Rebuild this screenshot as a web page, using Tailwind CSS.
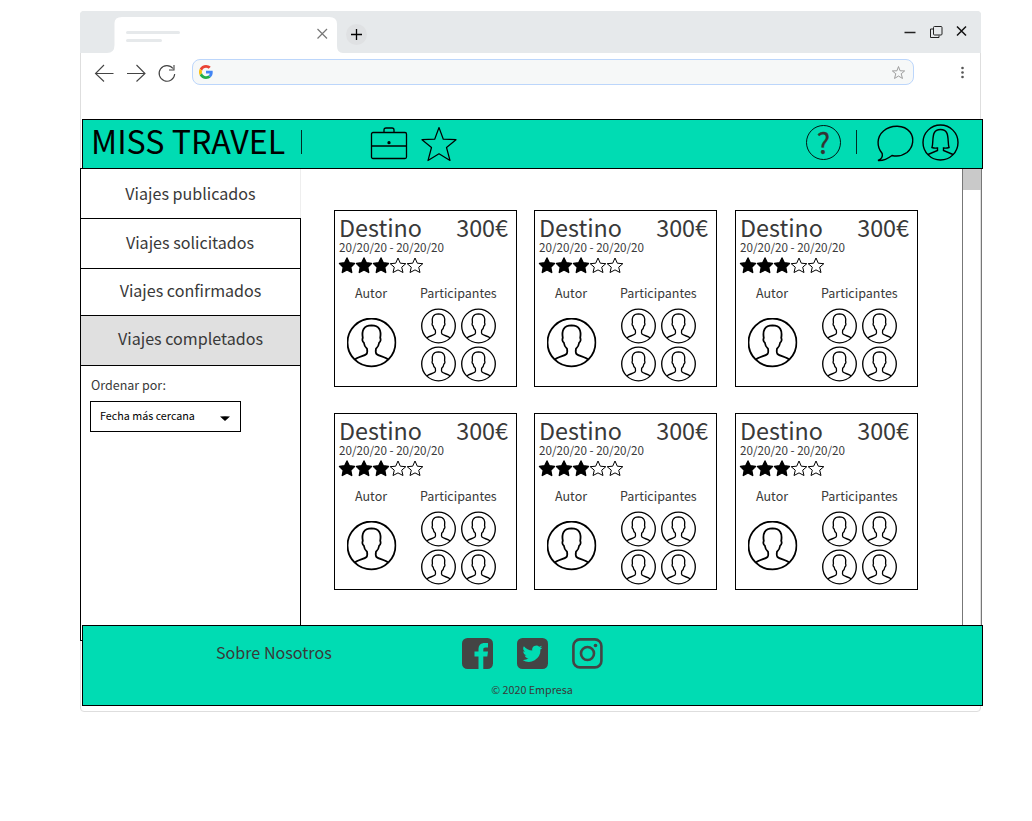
<!DOCTYPE html>
<html lang="es">
<head>
<meta charset="utf-8">
<title>Miss Travel</title>
<script src="https://cdn.jsdelivr.net/npm/@tailwindcss/browser@4"></script>
</head>
<body class="bg-white w-[1032px] h-[821px] overflow-hidden font-['Noto_Sans_CJK_SC','Noto_Sans',sans-serif] text-[#393939]">
<svg class="hidden">
  <symbol id="user" viewBox="0 0 50 50"><g fill="none" stroke="currentColor" stroke-linejoin="round"><circle cx="25" cy="25" r="24"/><path d="M8.500 42C11 39.500 18 38.500 20 36.500C21 35.500 20.800 33 20.500 31.200C18.500 29.500 17.600 27.500 17.300 25C15.800 24.500 15.500 21.500 16.300 20.500C15 13 17 8 25 7.800C33 8 35 13 33.700 20.500C34.500 21.500 34.200 24.500 32.700 25C32.400 27.500 31.500 29.500 29.500 31.200C29.200 33 29 35.500 30 36.500C32 38.500 39 39.500 41.500 42"/></g></symbol>
  <symbol id="star" viewBox="0 0 36 36"><path d="M18 1.500L22.300 13.200L35 13.700L25.500 21.500L29 34.500L18 27.800L7 34.500L10.500 21.500L1 13.700L13.700 13.200Z" stroke="currentColor" stroke-linejoin="round"/></symbol>
  <symbol id="rating" viewBox="0 0 86 17"><g stroke="#000" stroke-linejoin="round"><path id="s" stroke-width="1.400" d="M9 1L11.300 5.800L16.500 6.500L12.700 10.200L13.700 15.500L9 13L4.300 15.500L5.300 10.200L1.500 6.500L6.700 5.800Z"/><use href="#s" x="17"/><use href="#s" x="34"/><g fill="#fff"><path d="M60 1L62.300 6.200L67.800 6.700L63.700 10.200L65 15.500L60 12.900L55 15.500L56.300 10.200L52.200 6.700L57.700 6.200Z"/><path d="M77 1L79.300 6.200L84.800 6.700L80.700 10.200L82 15.500L77 12.900L72 15.500L73.300 10.200L69.200 6.700L74.700 6.200Z"/></g></g></symbol>
</svg>
<div class="ml-[80px] mt-[11px] w-[901px] h-[701px] border border-[#dedede] rounded-[4px]">
  <!-- Tab strip -->
  <div class="-ml-px -mt-px w-[901px] h-[42px] bg-[#e6e9eb] rounded-t-[4px] flex">
    <svg class="w-[901px] h-[42px]" viewBox="0 0 901 42" fill="none">
      <path d="M27 42Q34.500 42 34.500 34V12Q34.500 6 42 6H249Q257 6 257 13V35Q257 42 263 42Z" fill="#fff"/>
      <path d="M47.500 21.500H98.500M47.500 29.500H80.500" stroke="#e6e9eb" stroke-width="3" stroke-linecap="round"/>
      <path d="M237.500 18L247 27.500M247 18L237.500 27.500" stroke="#777" stroke-width="1.200"/>
      <circle cx="276.500" cy="23.500" r="10.500" fill="#dfe1e3"/>
      <path d="M271 23.500H282M276.500 18V29" stroke="#000" stroke-width="1.300"/>
      <path d="M824.500 21.500H835.500" stroke="#222" stroke-width="1.500"/>
      <rect x="853.500" y="15.500" width="8.500" height="8.500" rx="1" stroke="#222"/>
      <path d="M853 18H850.500V26.500H859V24.500" stroke="#222"/>
      <path d="M877 15.500L886 24.500M886 15.500L877 24.500" stroke="#111" stroke-width="1.500"/>
    </svg>
  </div>
  <!-- Toolbar -->
  <div class="h-[66px] pt-[6px] flex items-start">
    <svg class="ml-[12px] w-[99px] h-[28px] shrink-0" viewBox="0 0 99 28" fill="none" stroke="#444" stroke-width="1.100">
      <path d="M20.500 14.500H2.500M11 6L2.500 14.500L11 22.500M34 14.500H52M43.500 6L52 14.500L43.500 22.500"/>
      <path d="M80 9.500A7.800 7.800 0 1 0 81.700 15M81 6V11H76"/>
    </svg>
    <div class="w-[722px] h-[26px] border border-[#bcd6fb] rounded-[8px] bg-[#f6f8f8] flex items-center justify-between pl-[6px] pr-[8px]">
      <svg class="w-[14px] h-[14px]" viewBox="0 0 48 48"><path fill="#ea4335" d="M24 9.500c3.500 0 6.700 1.200 9.200 3.600l6.900-6.900C35.900 2.400 30.500 0 24 0 14.600 0 6.500 5.400 2.600 13.200l8 6.200C12.400 13.700 17.700 9.500 24 9.500z"/><path fill="#4285f4" d="M47 24.600c0-1.600-.2-3.100-.4-4.600H24v9h12.900c-.6 3-2.200 5.500-4.700 7.200l7.700 6C44.400 38 47 31.800 47 24.600z"/><path fill="#fbbc05" d="M10.500 28.600c-.5-1.500-.8-3-.8-4.600s.3-3.100.8-4.600l-8-6.200C1 16.500 0 20.100 0 24s.9 7.500 2.600 10.800z"/><path fill="#20b04b" d="M24 48c6.500 0 11.900-2.100 15.900-5.800l-7.700-6c-2.200 1.400-4.900 2.300-8.200 2.300-6.300 0-11.600-4.200-13.500-9.900l-8 6.200C6.500 42.600 14.600 48 24 48z"/></svg>
      <svg class="w-[13px] h-[13px] text-[#999]" fill="none" stroke-width="2.600"><use href="#star"/></svg>
    </div>
    <svg class="ml-[46px] mt-[7px] w-[5px] h-[14px]" viewBox="0 0 5 14" fill="#555"><circle cx="2.500" cy="2" r="1.300"/><circle cx="2.500" cy="6.500" r="1.300"/><circle cx="2.500" cy="11" r="1.300"/></svg>
  </div>
  <!-- App header -->
  <header class="relative z-10 ml-px w-[901px] h-[50px] bg-[#00dcb3] border border-black flex items-center text-black">
    <h1 class="ml-[8px] w-[194px] text-[32.200px] leading-[40px] whitespace-nowrap pb-[8px]">MISS TRAVEL</h1>
    <span class="ml-[16px] w-px h-[24px] bg-black/80 -mt-[5px]"></span>
    <svg class="ml-[68px] -mt-px w-[38px] h-[34px]" viewBox="0 0 38 34" fill="none" stroke="#000" stroke-width="1.300"><rect x="1.500" y="5.500" width="35" height="26" rx="1.500"/><path d="M1.500 19H36.500M14 5.500V3Q14 1 16 1H22Q24 1 24 3V5.500"/><circle cx="19" cy="15.700" r="1" fill="#000"/></svg>
    <svg class="ml-[13px] mr-px -mt-px w-[36px] h-[36px]" fill="none" stroke-width="1.200"><use href="#star"/></svg>
    <div class="ml-[348px] w-[35px] h-[35px] -mt-[4px] rounded-full border border-black/90 text-[#333] text-[28px] leading-[32px] text-center [-webkit-text-stroke:0.300px_#333]">?</div>
    <span class="ml-[15px] w-px h-[24px] bg-black/80 -mt-[5px]"></span>
    <svg class="ml-[20px] -mt-[3px] w-[38px] h-[38px]" viewBox="0 0 38 38" fill="none" stroke="#000" stroke-width="1.400"><path d="M1 36.500C4.500 35 6 33 5.200 29.500C-.5 23-.5 13 6.500 7C14 .5 27 .5 33 8C37.500 14 36.500 23 30 28.500C25 32 19 32.500 15 31.500C11 34.500 6 37 1 36.500Z"/></svg>
    <svg class="ml-[7px] -mt-[4px] w-[37px] h-[37px]" viewBox="0 0 37 37" fill="none" stroke="#000" stroke-width="1.400"><circle cx="18.500" cy="18.500" r="17.500"/><path d="M6 30.500L15.500 26.500V24Q12.500 24.500 10 23.500C12 17 8.500 5.500 18.500 5.500C28.500 5.500 25 17 27 23.500Q24.500 24.500 21.500 24V26.500L31 30.500"/></svg>
  </header>
  <div class="h-[456px] flex">
    <aside class="-ml-px -mt-px w-[221px] h-[473px] border-y border-l border-black bg-white shrink-0 text-[16.100px] text-center flex flex-col">
      <div class="h-[49px] border-r border-[#eee] leading-[48px]">Viajes publicados</div>
      <div class="h-[51px] border-y border-r border-black leading-[46px] pr-px">Viajes solicitados</div>
      <div class="h-[47px] border-b border-r border-black leading-[42px]">Viajes confirmados</div>
      <div class="h-[50px] border-b border-r border-black leading-[45px] bg-[#e0e0e0]">Viajes completados</div>
      <div class="grow border-r border-black pl-[9px] text-left">
        <p class="pl-[1px] pt-[9px] text-[12.500px] leading-[20px]">Ordenar por:</p>
        <div class="mt-[6px] w-[151px] h-[31px] border border-black text-black text-[10.750px] leading-[16px] flex items-center justify-between pl-[9px] pr-[10px]">
          <span class="pb-[2px]">Fecha más cercana</span>
          <svg class="w-[10px] h-[5px] mt-[3px]" viewBox="0 0 10 5"><path d="M0 .5Q5 0 10 .5L5 5Z"/></svg>
        </div>
      </div>
    </aside>
    <main id="cards" class="w-[661px] shrink-0 pl-[33px] pt-[41px] grid grid-cols-[200px_201px_183px] auto-rows-[203px]"></main>
    <div class="w-[20px] h-[456px] border-x border-[#777] shrink-0"><div class="h-[21px] bg-[#c9c9c9]"></div></div>
  </div>
  <footer class="relative z-10 ml-px w-[901px] h-[81px] bg-[#00dcb3] border border-black">
    <div class="h-[54px] flex items-center">
      <a class="ml-[133px] w-[130px] text-[16.100px] pb-[2px]">Sobre Nosotros</a>
      <svg class="ml-[116px] w-[31px] h-[31px]" viewBox="0 0 31 31"><rect width="31" height="31" rx="5.500" fill="#444"/><path fill="#00dcb3" d="M16.500 31V18.500H12.500V13.500H16.500V11.500C16.500 7 19 5 22.500 5H26V9.500H23.500C21.800 9.500 21.300 10.300 21.300 11.800V13.500H26L25.300 18.500H21.300V31Z"/></svg>
      <svg class="ml-[24px] w-[31px] h-[31px]" viewBox="0 0 31 31"><rect width="31" height="31" rx="5.500" fill="#444"/><path fill="#00dcb3" transform="translate(5.600 5.300) scale(.84)" d="M23.600 4.900a9.600 9.600 0 0 1-2.800.8 4.800 4.800 0 0 0 2.100-2.700 9.700 9.700 0 0 1-3.100 1.200 4.900 4.900 0 0 0-8.300 4.500A13.800 13.800 0 0 1 1.500 3.600a4.900 4.900 0 0 0 1.500 6.500 4.800 4.800 0 0 1-2.200-.6 4.900 4.900 0 0 0 3.900 4.800 4.900 4.900 0 0 1-2.200.1 4.900 4.900 0 0 0 4.600 3.400A9.800 9.800 0 0 1 0 19.800 13.800 13.800 0 0 0 21.200 7.500 9.800 9.800 0 0 0 23.600 4.900z"/></svg>
      <svg class="ml-[24px] w-[31px] h-[31px]" viewBox="0 0 31 31" fill="none" stroke="#444" stroke-width="2.600"><rect x="1.400" y="1.400" width="28" height="28" rx="6.500"/><circle cx="15.500" cy="15.500" r="6.500"/><circle cx="23.500" cy="7.500" r="1.800" fill="#444" stroke="none"/></svg>
    </div>
    <p class="text-center text-[10.750px] leading-[20px] pr-px">© 2020 Empresa</p>
  </footer>
</div>
<template id="card">
  <article class="w-[183px] h-[177px] border border-black pl-[4px]">
    <div class="h-[29px] flex justify-between pr-[8px] text-[23.350px] leading-[33px]"><h2>Destino</h2><span>300€</span></div>
    <p class="-mt-px text-[11.650px] leading-[15px]">20/20/20 - 20/20/20</p>
    <svg class="-ml-px mt-[3px] w-[86px] h-[17px]"><use href="#rating"/></svg>
    <div class="mt-[9px] flex text-[12.500px] leading-[20px]"><span class="ml-[16px] w-[65px]">Autor</span><span>Participantes</span></div>
    <div class="flex text-black">
      <svg class="ml-[7px] mt-[14px] w-[51px] h-[51px] p-[0.500px]" stroke-width="1.800"><use href="#user"/></svg>
      <div class="ml-[24px] mt-[5px] grid grid-cols-[40px_36px] auto-rows-[38px]">
        <svg class="w-[35px] h-[36px]" stroke-width="1.900"><use href="#user"/></svg>
        <svg class="w-[35px] h-[36px]" stroke-width="1.900"><use href="#user"/></svg>
        <svg class="w-[35px] h-[36px]" stroke-width="1.900"><use href="#user"/></svg>
        <svg class="w-[35px] h-[36px]" stroke-width="1.900"><use href="#user"/></svg>
      </div>
    </div>
  </article>
</template>
<script>
const t=document.getElementById('card'),c=document.getElementById('cards');
for(let i=0;i<6;i++)c.append(t.content.cloneNode(true));
</script>
</body>
</html>
